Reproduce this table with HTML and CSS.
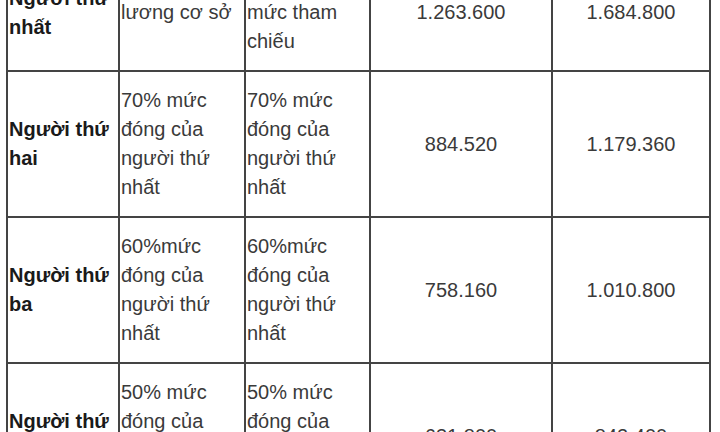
FILE: index.html
```html
<!DOCTYPE html>
<html lang="vi">
<head>
<meta charset="utf-8">
<link rel="stylesheet" href="styles.css">
</head>
<body>
<table class="fee-table">
  <colgroup>
    <col class="c-who">
    <col class="c-old">
    <col class="c-new">
    <col class="c-v1">
    <col class="c-v2">
  </colgroup>
  <tbody>
    <tr>
      <th class="who">Người thứ nhất</th>
      <td class="rule">4,5% mức lương cơ sở</td>
      <td class="rule">4,5% của mức tham chiếu</td>
      <td class="num">1.263.600</td>
      <td class="num">1.684.800</td>
    </tr>
    <tr>
      <th class="who">Người thứ hai</th>
      <td class="rule">70% mức đóng của người thứ nhất</td>
      <td class="rule">70% mức đóng của người thứ nhất</td>
      <td class="num">884.520</td>
      <td class="num">1.179.360</td>
    </tr>
    <tr>
      <th class="who">Người thứ ba</th>
      <td class="rule">60%mức đóng của người thứ nhất</td>
      <td class="rule">60%mức đóng của người thứ nhất</td>
      <td class="num">758.160</td>
      <td class="num">1.010.800</td>
    </tr>
    <tr>
      <th class="who">Người thứ tư</th>
      <td class="rule">50% mức đóng của người thứ nhất</td>
      <td class="rule">50% mức đóng của người thứ nhất</td>
      <td class="num">631.800</td>
      <td class="num">842.400</td>
    </tr>
  </tbody>
</table>
</body>
</html>
```

FILE: styles.css
```css
html, body {
  margin: 0;
  padding: 0;
  background: #ffffff;
}

body {
  font-family: "Liberation Sans", Arial, sans-serif;
  font-size: 20px;
  line-height: 29px;
  color: #3a3a3a;
  overflow: hidden;
}

.fee-table {
  border-collapse: collapse;
  table-layout: fixed;
  width: 705px;
  margin: -47px 0 0 6px;
}

.c-who { width: 112px; }
.c-old { width: 126px; }
.c-new { width: 125px; }
.c-v1 { width: 182px; }
.c-v2 { width: 158px; }

.fee-table th,
.fee-table td {
  border: 2px solid #444444;
  padding: 14px 1px;
  text-align: left;
}

.who {
  font-weight: bold;
  color: #1a1a1a;
  vertical-align: middle;
}

.rule {
  vertical-align: top;
}

.fee-table td.num {
  text-align: center;
  vertical-align: middle;
}
```
